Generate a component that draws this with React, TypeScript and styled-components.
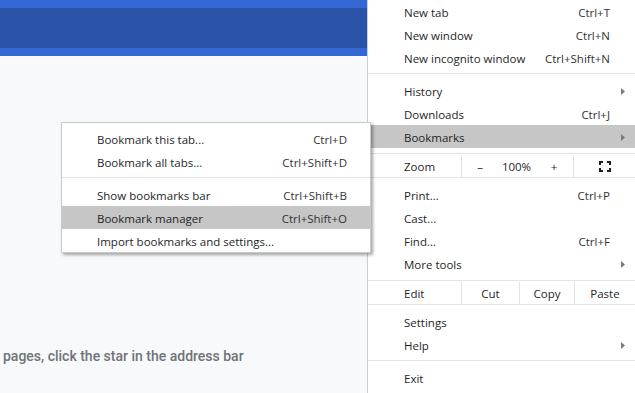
import React from "react";
import styled, { createGlobalStyle } from "styled-components";

const GlobalStyle = createGlobalStyle`
  html, body {
    margin: 0;
    padding: 0;
  }
  body {
    width: 635px;
    height: 393px;
    overflow: hidden;
    font-family: "Open Sans", "Liberation Sans", sans-serif;
  }
`;

const Window = styled.div`
  position: relative;
  display: flex;
  width: 635px;
  height: 393px;
  overflow: hidden;
  background: #f8f9fa;
`;

const Page = styled.div`
  flex: 0 0 367px;
  display: flex;
  flex-direction: column;
`;

const Header = styled.div`
  height: 40px;
  padding: 8px 0;
  background: #3367d3;
`;

const HeaderBar = styled.div`
  height: 100%;
  background: #2a52a7;
`;

const EmptyText = styled.div`
  padding: 292px 0 0 3px;
  font-family: Roboto, "Liberation Sans", sans-serif;
  font-size: 14px;
  font-weight: 500;
  line-height: 17px;
  color: #6f7377;
  white-space: nowrap;
`;

const Menu = styled.div`
  flex: 1;
  display: flex;
  flex-direction: column;
  background: #fff;
  border-left: 1px solid #cfcfcf;
  font-size: 11.5px;
  color: #1f1f1f;
`;

const Item = styled.div<{ $active?: boolean }>`
  box-sizing: border-box;
  display: flex;
  align-items: center;
  height: 23px;
  padding: 2px 10px 0 36px;
  background: ${props => (props.$active ? "#c6c6c6" : "transparent")};
  white-space: nowrap;
`;

const Label = styled.span`
  flex: 1;
`;

const Shortcut = styled.span`
  color: #333;
`;

const Trail = styled.span`
  display: flex;
  justify-content: flex-end;
  width: 15px;
`;

const Separator = styled.div`
  height: 1px;
  margin: 4px 0 5px;
  background: #e3e3e3;
`;

const ControlRow = styled.div<{ $cols: string }>`
  box-sizing: border-box;
  display: grid;
  grid-template-columns: ${props => props.$cols};
  height: 25px;
  margin: 5px 0;
  padding-top: 1px;
  border-top: 1px solid #e3e3e3;
  border-bottom: 1px solid #e3e3e3;
`;

const RowLabel = styled.div`
  display: flex;
  align-items: center;
  padding-left: 36px;
`;

const Cell = styled.div`
  display: flex;
  align-items: center;
  justify-content: center;
  border-left: 1px solid #e3e3e3;
`;

const ZoomControls = styled.div`
  display: grid;
  grid-template-columns: 36px 37px 1fr;
  border-left: 1px solid #e3e3e3;
`;

const ZoomPart = styled.span`
  display: flex;
  align-items: center;
  justify-content: center;
`;

const SubMenu = styled.div`
  position: absolute;
  left: 61px;
  top: 122px;
  width: 308px;
  padding: 4px 0 0;
  background: #fff;
  border: 1px solid #c9c9c9;
  box-shadow: 2px 2px 3px rgba(0, 0, 0, 0.35);
  font-size: 11.5px;
  color: #1f1f1f;
  z-index: 2;
`;

const SubItem = styled(Item)`
  padding: 2px 23px 0 35px;
`;

const Arrow = () => (
  <svg width="4" height="7" viewBox="0 0 4 7">
    <path d="M0 0 L4 3.5 L0 7 Z" fill="#7b7b7b" />
  </svg>
);

const FullscreenIcon = () => (
  <svg width="12" height="11" viewBox="0 0 12 11" fill="none" stroke="#1f1f1f" strokeWidth="2">
    <path d="M1 4 V1 H4" />
    <path d="M8 1 H11 V4" />
    <path d="M1 7 V10 H4" />
    <path d="M8 10 H11 V7" />
  </svg>
);

interface IEntry {
  label: string;
  shortcut?: string;
  submenu?: boolean;
  active?: boolean;
}

const MenuItem: React.FC<IEntry> = ({ label, shortcut, submenu, active }) => (
  <Item $active={active}>
    <Label>{label}</Label>
    {shortcut ? <Shortcut>{shortcut}</Shortcut> : null}
    <Trail>{submenu ? <Arrow /> : null}</Trail>
  </Item>
);

const SubMenuItem: React.FC<IEntry> = ({ label, shortcut, active }) => (
  <SubItem $active={active}>
    <Label>{label}</Label>
    {shortcut ? <Shortcut>{shortcut}</Shortcut> : null}
  </SubItem>
);

const App: React.FC = () => {
  return (
    <>
      <GlobalStyle />
      <Window>
        <Page>
          <Header>
            <HeaderBar />
          </Header>
          <EmptyText>pages, click the star in the address bar</EmptyText>
        </Page>
        <Menu>
          <MenuItem label="New tab" shortcut="Ctrl+T" />
          <MenuItem label="New window" shortcut="Ctrl+N" />
          <MenuItem label="New incognito window" shortcut="Ctrl+Shift+N" />
          <Separator />
          <MenuItem label="History" submenu />
          <MenuItem label="Downloads" shortcut="Ctrl+J" />
          <MenuItem label="Bookmarks" submenu active />
          <ControlRow $cols="93px 112px 1fr">
            <RowLabel>Zoom</RowLabel>
            <ZoomControls>
              <ZoomPart>–</ZoomPart>
              <ZoomPart>100%</ZoomPart>
              <ZoomPart>+</ZoomPart>
            </ZoomControls>
            <Cell>
              <FullscreenIcon />
            </Cell>
          </ControlRow>
          <MenuItem label="Print..." shortcut="Ctrl+P" />
          <MenuItem label="Cast..." />
          <MenuItem label="Find..." shortcut="Ctrl+F" />
          <MenuItem label="More tools" submenu />
          <ControlRow $cols="93px 58px 55px 1fr">
            <RowLabel>Edit</RowLabel>
            <Cell>Cut</Cell>
            <Cell>Copy</Cell>
            <Cell>Paste</Cell>
          </ControlRow>
          <MenuItem label="Settings" />
          <MenuItem label="Help" submenu />
          <Separator />
          <MenuItem label="Exit" />
        </Menu>
        <SubMenu>
          <SubMenuItem label="Bookmark this tab..." shortcut="Ctrl+D" />
          <SubMenuItem label="Bookmark all tabs..." shortcut="Ctrl+Shift+D" />
          <Separator />
          <SubMenuItem label="Show bookmarks bar" shortcut="Ctrl+Shift+B" />
          <SubMenuItem label="Bookmark manager" shortcut="Ctrl+Shift+O" active />
          <SubMenuItem label="Import bookmarks and settings..." />
        </SubMenu>
      </Window>
    </>
  );
};

export default App;
